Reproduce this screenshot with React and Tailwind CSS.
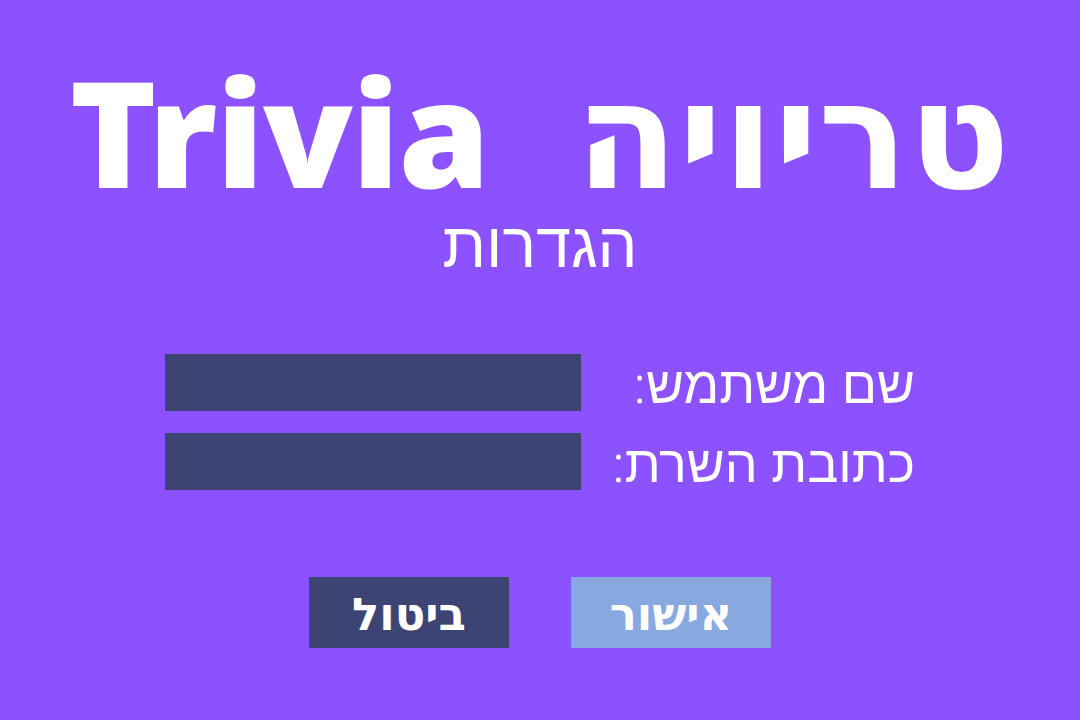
export default function App() {
  return (
    <div className="w-full h-[720px] bg-[#8c52ff] text-white flex flex-col items-center" style={{fontFamily: '"Noto Sans", "DejaVu Sans", sans-serif'}}>
      <div dir="ltr" className="flex flex-row items-baseline gap-[86px] mt-[48px] h-[165px]">
        <div className="text-[147px] leading-[165px] font-black tracking-[-1px]">Trivia</div>
        <div className="text-[150px] leading-[165px] font-black" dir="rtl">טריויה</div>
      </div>
      <div dir="rtl" className="text-[63px] leading-[60px] font-light">הגדרות</div>
      <div dir="rtl" className="flex flex-col gap-[22px] mt-[81px]">
        <div className="flex flex-row items-center gap-[34px]">
          <div className="w-[300px] text-[52px] leading-[57px] font-light whitespace-nowrap">שם משתמש:</div>
          <div className="w-[416px] h-[57px] bg-[#3d4373]"></div>
        </div>
        <div className="flex flex-row items-center gap-[34px]">
          <div className="w-[300px] text-[52px] leading-[57px] font-light whitespace-nowrap">כתובת השרת:</div>
          <div className="w-[416px] h-[57px] bg-[#3d4373]"></div>
        </div>
      </div>
      <div dir="rtl" className="flex flex-row gap-[62px] mt-[87px]">
        <button className="w-[200px] h-[71px] bg-[#87a9e0] text-white text-[45px] font-semibold">אישור</button>
        <button className="w-[200px] h-[71px] bg-[#3d4373] text-white text-[45px] font-semibold">ביטול</button>
      </div>
    </div>
  )
}
